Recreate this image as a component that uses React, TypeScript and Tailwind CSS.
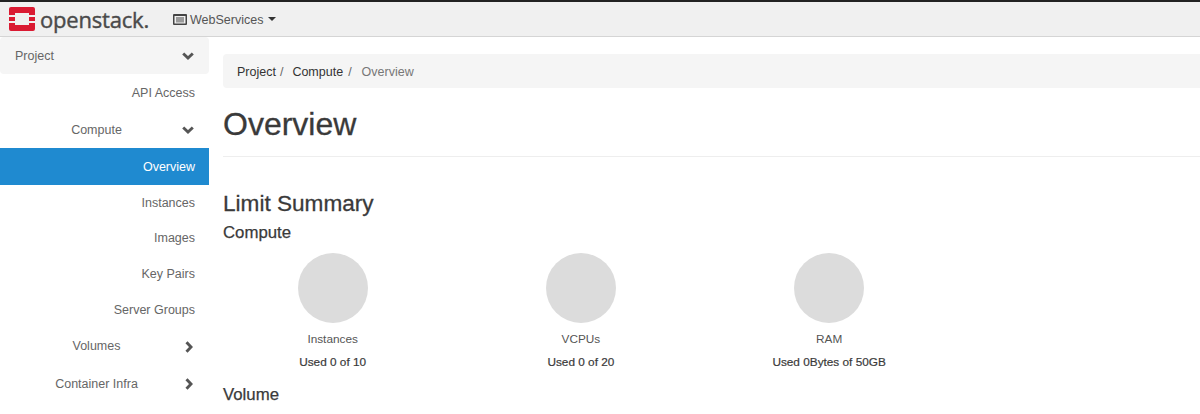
const font = "font-['Liberation_Sans',Arial,sans-serif]";

function Logo() {
  return (
    <svg width="26" height="24" viewBox="0 0 26 24" className="shrink-0">
      <path fill="#da1a32" fillRule="evenodd" d="M2 0h22a2 2 0 0 1 2 2v6h-6V6H6v2H0V2a2 2 0 0 1 2-2zM0 10h6v4H0zM20 10h6v4h-6zM0 16h6v2h14v-2h6v6a2 2 0 0 1-2 2H2a2 2 0 0 1-2-2z" />
    </svg>
  );
}

function Down() {
  return (
    <svg width="12" height="8" viewBox="0 0 12 8" className="shrink-0">
      <polyline points="1.200,1.500 6,6 10.800,1.500" fill="none" stroke="#555" strokeWidth="2.900" />
    </svg>
  );
}

function Right() {
  return (
    <svg width="8" height="12" viewBox="0 0 8 12" className="shrink-0">
      <polyline points="1.500,1.200 6,6 1.500,10.800" fill="none" stroke="#555" strokeWidth="2.900" />
    </svg>
  );
}

function Row({ label, h, active, shift }: { label: string; h: string; active?: boolean; shift?: boolean }) {
  return (
    <div className={`flex items-center justify-end pr-[14px] text-[12.500px] ${shift ? "pt-[2px]" : ""} ${h} ${active ? "bg-[#1f8ad0] text-white" : "text-[#666]"}`}>
      {label}
    </div>
  );
}

function ParentRow({ label, h, icon, shift }: { label: string; h: string; icon: "down" | "right"; shift?: boolean }) {
  return (
    <div className={`flex items-center pl-[13px] text-[12.500px] text-[#666] ${h}`}>
      <span className={`w-[167px] text-center ${shift ? "pt-[2px]" : ""}`}>{label}</span>
      {icon === "down" ? <span className="ml-[2px]"><Down /></span> : <span className="ml-[5px]"><Right /></span>}
    </div>
  );
}

function Chart({ label, used }: { label: string; used: string }) {
  return (
    <div className="flex w-[248.250px] flex-col items-center">
      <div className="h-[70px] w-[70px] rounded-full bg-[#dcdcdc]" />
      <div className="mt-[7px] text-[11.800px] leading-[18px] text-[#555]">{label}</div>
      <div className="mt-[5px] text-[11.800px] leading-[18px] text-[#3a3a3a] [-webkit-text-stroke:0.2px_#3a3a3a]">{used}</div>
    </div>
  );
}

export default function App() {
  return (
    <div className={`${font} h-[414px] w-[1200px] overflow-hidden bg-white`}>
      <header className="flex h-[37px] items-center border-t-2 border-b border-t-[#222] border-b-[#d5d5d5] bg-[#f0f0f0] pl-[9px]">
        <Logo />
        <span className="ml-[5px] font-['Open_Sans',sans-serif] text-[22px] leading-none tracking-[-0.2px] text-[#4a4a4a] [-webkit-text-stroke:0.4px_#4a4a4a]">openstack.</span>
        <svg width="14" height="11" viewBox="0 0 14 11" className="ml-[24px]">
          <path fill="#444" fillRule="evenodd" d="M1 0h12a1 1 0 0 1 1 1v9a1 1 0 0 1-1 1H1a1 1 0 0 1-1-1V1a1 1 0 0 1 1-1zm.500 2v7.500h11V2zM3 3.500h8v1H3zM3 5.500h8v1H3zM3 7.500h8v.800H3z" />
        </svg>
        <span className="ml-[3px] pt-[2px] text-[12.500px] text-[#555]">WebServices</span>
        <span className="ml-[5px] h-0 w-0 border-x-[4px] border-t-[4px] border-x-transparent border-t-[#333]" />
      </header>
      <div className="flex">
        <aside className="w-[209px] shrink-0">
          <div className="flex h-[37px] items-center rounded-[4px] bg-[#f5f5f5] pl-[15px] text-[12.500px] text-[#666]">
            <span className="w-[167px] pt-[2px]">Project</span>
            <Down />
          </div>
          <Row label="API Access" h="h-[37px]" shift />
          <ParentRow label="Compute" h="h-[37px]" icon="down" shift />
          <Row label="Overview" h="h-[37px]" active shift />
          <Row label="Instances" h="h-[35px]" shift />
          <Row label="Images" h="h-[36px]" />
          <Row label="Key Pairs" h="h-[36px]" />
          <Row label="Server Groups" h="h-[36px]" />
          <ParentRow label="Volumes" h="h-[37px]" icon="right" />
          <ParentRow label="Container Infra" h="h-[38px]" icon="right" />
        </aside>
        <main className="min-w-0 flex-1 pl-[14px]">
          <nav className="mt-[17px] flex h-[34px] items-center rounded-l-[4px] bg-[#f5f5f5] pl-[14px] pt-[2px] text-[12.500px] text-[#333]">
            <span>Project</span>
            <span className="ml-[4px] text-[#666]">/</span>
            <span className="ml-[9px]">Compute</span>
            <span className="ml-[5px] text-[#666]">/</span>
            <span className="ml-[10px] text-[#777]">Overview</span>
          </nav>
          <h1 className="mt-[18px] text-[32px] leading-[36px] text-[#3a3a3a] [-webkit-text-stroke:0.3px_#3a3a3a]">Overview</h1>
          <div className="mt-[14px] h-px bg-[#eee]" />
          <h2 className="mt-[34px] text-[22.600px] leading-[26px] text-[#3a3a3a] [-webkit-text-stroke:0.3px_#3a3a3a]">Limit Summary</h2>
          <h3 className="mt-[6px] text-[16.800px] leading-[20px] text-[#3a3a3a] [-webkit-text-stroke:0.25px_#3a3a3a]">Compute</h3>
          <div className="-ml-[14.500px] mt-[10px] flex">
            <Chart label="Instances" used="Used 0 of 10" />
            <Chart label="VCPUs" used="Used 0 of 20" />
            <Chart label="RAM" used="Used 0Bytes of 50GB" />
          </div>
          <h3 className="mt-[14px] text-[16.800px] leading-[20px] text-[#3a3a3a] [-webkit-text-stroke:0.25px_#3a3a3a]">Volume</h3>
        </main>
      </div>
    </div>
  );
}
